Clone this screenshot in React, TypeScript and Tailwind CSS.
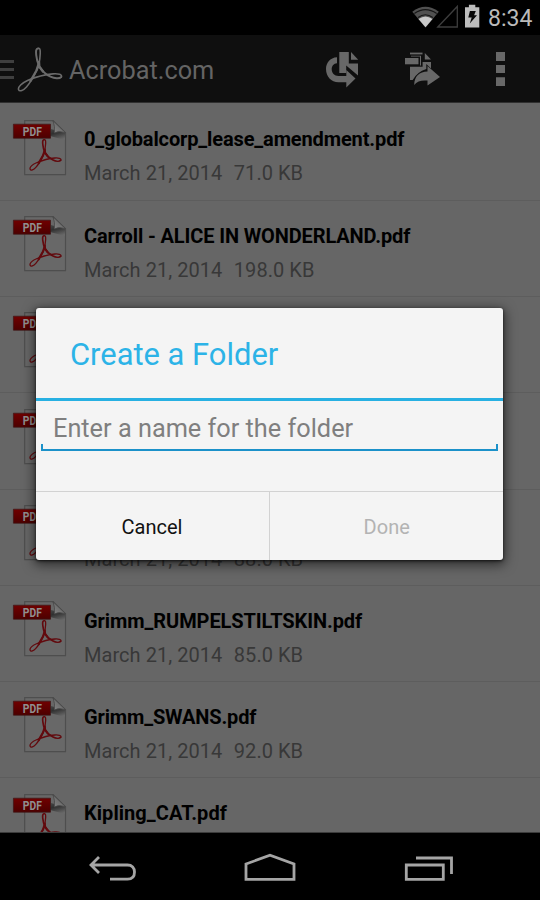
import React from "react";

const files = [
  ["0_globalcorp_lease_amendment.pdf", "71.0 KB", "tracking-[-0.13px]"],
  ["Carroll - ALICE IN WONDERLAND.pdf", "198.0 KB", "tracking-[-0.13px]"],
  ["Grimm_CINDERELLA.pdf", "96.0 KB", ""],
  ["Grimm_HANSEL.pdf", "94.0 KB", ""],
  ["Grimm_RAPUNZEL.pdf", "88.0 KB", ""],
  ["Grimm_RUMPELSTILTSKIN.pdf", "85.0 KB", "tracking-[-0.08px]"],
  ["Grimm_SWANS.pdf", "92.0 KB", "tracking-[-0.15px]"],
  ["Kipling_CAT.pdf", "90.0 KB", "tracking-[0.05px]"],
];

function AcrobatMark({ color, className }: { color: string; className: string }) {
  return (
    <svg viewBox="0 0 46 46" className={className} fill="none" stroke={color} strokeLinecap="round" strokeLinejoin="round">
      <path d="M21 2.5C19 2.5 18.8 5 19.2 9C19.7 14 21 18 22.3 20.5C25 25 29 28.5 33.5 30.7C37.5 32.6 42.5 33 44 31.2" strokeWidth="2" />
      <path d="M21 2.5C23 1.5 23.4 4 23.2 8C23 13 22.5 18 20 23.5C17 30 13 37 9.5 41C6.5 44.4 2.5 46 1.6 43.7C.6 41 5 37 10.5 34.5C18 31.3 28 28.5 36 27.9C41 27.5 45.5 28.5 44.4 31" strokeWidth="1.6" />
      <path d="M22 16L22.3 20.5L26 25.5M22 17L19.5 24.5L13.5 35" strokeWidth="2.4" />
    </svg>
  );
}

function PdfIcon() {
  return (
    <div className="ml-[12px] mt-[15.3px] h-[60px] w-[57px] shrink-0">
      <svg viewBox="0 0 57 60" className="h-[60px] w-[57px]">
        <defs>
          <linearGradient id="banner" x1="0" y1="0" x2="0" y2="1">
            <stop offset="0" stopColor="#700000" />
            <stop offset="1" stopColor="#4c0000" />
          </linearGradient>
          <linearGradient id="curl" x1="0" y1="1" x2="1" y2="0">
            <stop offset="0" stopColor="#858585" />
            <stop offset=".55" stopColor="#6b6b6b" />
            <stop offset="1" stopColor="#484848" />
          </linearGradient>
          <linearGradient id="fold" x1="0.2" y1="0" x2=".6" y2="1">
            <stop offset="0" stopColor="#444" />
            <stop offset=".35" stopColor="#303030" />
            <stop offset="1" stopColor="#686868" />
          </linearGradient>
        </defs>
        <path d="M12.7 .7H41L53.5 12.7V54.7H12.7Z" fill="#686868" stroke="#4e4e4e" strokeWidth="1.2" />
        <path d="M39 9L53 13V20L38 16Z" fill="url(#fold)" />
        <path d="M41 .7L53.5 12.7Q47 10.3 42.3 13Q43.3 6.5 41 .7Z" fill="url(#curl)" stroke="#464646" strokeWidth=".8" />
        <path d="M1.4 4.2H38.5V18.2H1.4Z" fill="url(#banner)" stroke="#3e1515" strokeWidth=".7" />
        <text x="10.8" y="15.7" textLength="19" lengthAdjust="spacingAndGlyphs" className="font-['Roboto',sans-serif] text-[12.9px] font-bold" fill="#909090">PDF</text>
        <svg x="16.5" y="18" width="34" height="33" viewBox="0 0 46 46">
          <g fill="none" stroke="#620a0e" strokeLinecap="round">
            <path d="M21 2.5C19 2.5 18.8 5 19.2 9C19.7 14 21 18 22.3 20.5C25 25 29 28.5 33.5 30.7C37.5 32.6 42.5 33 44 31.2" strokeWidth="2.3" />
            <path d="M21 2.5C23 1.5 23.4 4 23.2 8C23 13 22.5 18 20 23.5C17 30 13 37 9.5 41C6.5 44.4 2.5 46 1.6 43.7C.6 41 5 37 10.5 34.5C18 31.3 28 28.5 36 27.9C41 27.5 45.5 28.5 44.4 31" strokeWidth="1.8" />
            <path d="M22 16L22.3 20.5L26 25.5M22 17L19.5 24.5L13.5 35" strokeWidth="3" />
          </g>
        </svg>
      </svg>
    </div>
  );
}

function StatusBar() {
  return (
    <div className="flex h-[35px] items-start justify-end bg-black">
      <svg viewBox="-2.3 0 78 35" className="h-[35px] w-[78px]">
        <path d="M0 11.7Q13 2 26.5 11.7L13.2 27.5Z" fill="#505050" />
        <path d="M2.1 13.5Q13 5.8 24.4 13.5M5.8 17.5Q13 12 20.5 17.5" stroke="#151515" strokeWidth="1.1" fill="none" />
        <path d="M6.2 19.1Q13.2 13.9 20.2 19.1L13.2 27.3Z" fill="#c9c9c9" />
        <path d="M25.5 27L45 6.5V27Z" fill="none" stroke="#3d3d3d" strokeWidth="1.3" />
        <path d="M52.7 7.2H56.6V4.8H63V7.2H67V27.5H52.7Z" fill="#bdbdbd" />
        <path d="M57.6 11H63.5L61.8 15.3H64.7L57.5 23.5L59.4 17.6H56Z" fill="#080808" />
      </svg>
      <span className="mr-[8px] mt-[5px] w-[44px] whitespace-nowrap text-[23px] leading-[28px] text-[#bababa]">8:34</span>
    </div>
  );
}

function Header() {
  return (
    <header className="flex h-[68px] items-center border-b-[1px] border-[#303030] bg-[#0f0f0f]">
      <div className="mt-[2px] flex w-[14px] flex-col gap-[5px]">
        <div className="h-[3px] bg-[#3f3f3f]" />
        <div className="h-[3.5px] bg-[#3f3f3f]" />
        <div className="h-[3px] bg-[#3f3f3f]" />
      </div>
      <AcrobatMark color="#6b6b6b" className="ml-[3px] h-[46px] w-[46px]" />
      <h1 className="ml-[6px] mt-[4px] text-[25.3px] leading-[32px] text-[#646464]">Acrobat.com</h1>
      <svg viewBox="0 0 240 66" className="ml-auto h-[66px] w-[240px]" fill="#686868">
        <path d="M39.3 16H48.8V27.5H58V39.5L46.2 29.5V37H39.3Z" />
        <path d="M51 16L58.2 23.8H51Z" />
        <path d="M37 21.2C30 21.5 26 27 26 33C26 40.5 31.2 46.3 38.5 46.3H46.3V51.5L55.5 42.5L46.3 34V40H38.5C34.3 40 31.7 37 31.7 33.3C31.7 29.8 33.7 27.5 37 27.2Z" />
        <path d="M110 16.6H122.5V18.4H110Z" />
        <path d="M105 22H118.5V28.3H105Z" />
        <path d="M111 20.5V19.8H121V29.5H120V20.5Z" />
        <path d="M122.6 19.8V26H131V32.5L126.3 28V33Q117 36 112.7 44H110V30.8H122.6Z" />
        <path d="M124.8 17L131 23.6H124.8Z" />
        <path d="M114.2 49C114.3 40 119.5 35.8 127.5 35.5V30L140 41L127.5 49.5V44.5C121.5 44 117 45 114.2 49Z" />
        <path d="M196 16H205V25H196ZM196 29H205V37H196ZM196 41.3H205V50H196Z" />
      </svg>
    </header>
  );
}

function Dialog() {
  return (
    <section className="absolute left-[36px] top-[308px] flex h-[251.5px] w-[467.4px] flex-col rounded-[3px] bg-[#f4f4f4] shadow-[0_3px_12px_2px_rgba(0,0,0,0.55),0_1px_3px_rgba(0,0,0,0.7)]">
      <h2 className="h-[93px] border-b-[3px] border-[#27b0e2] pl-[34px] pt-[27px] text-[30.9px] leading-[40px] text-[#2cb3e7]">Create a Folder</h2>
      <div className="mx-[5px] mt-[6px] h-[43px] pl-[12px] text-[25.3px] leading-[43px] text-[#7f7f7f]">Enter a name for the folder</div>
      <div className="mx-[5px] -mt-[6px] h-[7px] border-x-2 border-b-2 border-[#1b91c9]" />
      <div className="mt-auto flex h-[69px] border-t border-[#d2d2d2] text-[20px] leading-[70px]">
        <button className="w-[234px] border-r border-[#d2d2d2] pr-[1px] text-[#111]">Cancel</button>
        <button className="flex-1 text-[#b3b3b3]">Done</button>
      </div>
    </section>
  );
}

export default function App() {
  return (
    <div className="relative flex h-[900px] w-[540px] flex-col overflow-hidden bg-black font-['Roboto',sans-serif]">
      <StatusBar />
      <Header />
      <main className="h-[729px] overflow-hidden bg-[#666] pt-[1.35px]">
        {files.map(([name, size, tracking]) => (
          <div key={name} className="flex h-[96.3px] border-b border-[#5d5d5d]">
            <PdfIcon />
            <div className="ml-[15px] pt-[21px]">
              <div className={`whitespace-nowrap text-[20px] font-bold leading-[28px] text-black ${tracking}`}>{name}</div>
              <div className="mt-[6px] flex gap-[11.4px] whitespace-nowrap text-[20px] leading-[28px] tracking-[0.05px] text-[#383838]">
                <span>March 21, 2014</span>
                <span>{size}</span>
              </div>
            </div>
          </div>
        ))}
      </main>
      <nav className="h-[68px] border-t border-[#3c3c3c] bg-black">
        <svg viewBox="0 0 540 67" className="h-[67px] w-[540px]" fill="none" stroke="#a5a5a5" strokeWidth="2.8">
          <path d="M99 24L91 32L99 40M91 32H127.5C132 32 134.5 35 134.5 39C134.5 43.5 132 46.2 127.5 46.2H110" />
          <path d="M246 31L270 22.3L294 31V46.3H246Z" />
          <path d="M406.3 32H443.3V46.3H406.3ZM416 25H451.5V41" />
        </svg>
      </nav>
      <Dialog />
    </div>
  );
}
